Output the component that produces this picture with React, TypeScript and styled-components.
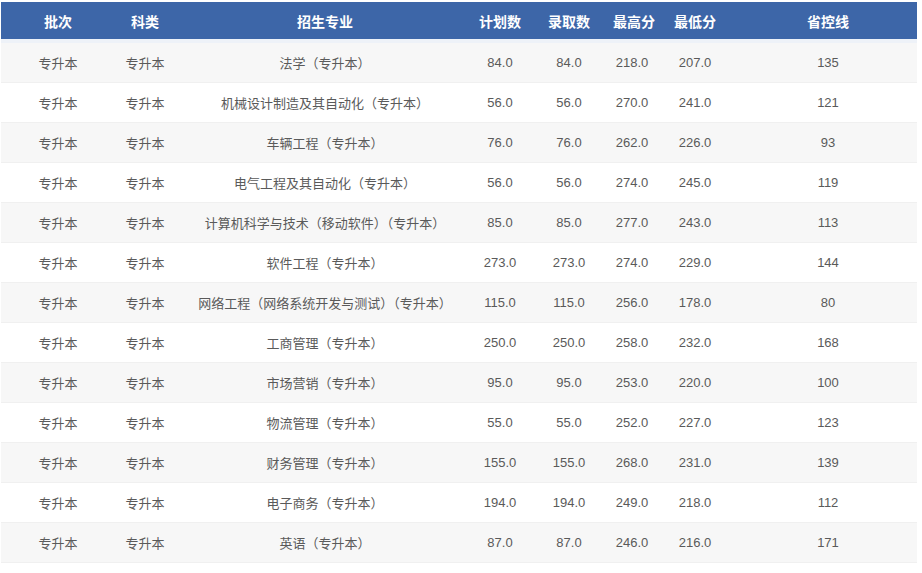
import React from 'react';
import styled, { createGlobalStyle } from 'styled-components';

const GlobalStyle = createGlobalStyle`
  body {
    margin: 0;
    background: #fff;
    font-family: "Liberation Sans", Arial, "Noto Sans CJK SC", sans-serif;
  }
`;

const Wrap = styled.div`
  padding: 2px 5px 0 1px;
`;

const Table = styled.table`
  width: 916px;
  border-collapse: collapse;
  table-layout: fixed;
`;

const HeadCell = styled.th<{ w: number }>`
  width: ${(p) => p.w}px;
  height: 37px;
  background: #3d66a8;
  color: #fff;
  font-size: 14px;
  font-weight: bold;
  text-align: center;
  white-space: nowrap;
  padding: 0;
  border-bottom: 4px solid #eef2f8;
`;

const Row = styled.tr<{ $alt: boolean }>`
  background: ${(p) => (p.$alt ? '#f7f7f7' : '#fff')};
  border-bottom: 1px solid #f0f0f0;
`;

const Cell = styled.td`
  height: 39px;
  padding: 0;
  text-align: center;
  white-space: nowrap;
  font-size: 13px;
  color: #5a5a5a;
`;

const columns: [string, number][] = [
  ['批次', 114],
  ['科类', 60],
  ['招生专业', 300],
  ['计划数', 50],
  ['录取数', 88],
  ['最高分', 38],
  ['最低分', 88],
  ['省控线', 178],
];

const rows: string[][] = [
  ['法学（专升本）', '84.0', '84.0', '218.0', '207.0', '135'],
  ['机械设计制造及其自动化（专升本）', '56.0', '56.0', '270.0', '241.0', '121'],
  ['车辆工程（专升本）', '76.0', '76.0', '262.0', '226.0', '93'],
  ['电气工程及其自动化（专升本）', '56.0', '56.0', '274.0', '245.0', '119'],
  ['计算机科学与技术（移动软件）（专升本）', '85.0', '85.0', '277.0', '243.0', '113'],
  ['软件工程（专升本）', '273.0', '273.0', '274.0', '229.0', '144'],
  ['网络工程（网络系统开发与测试）（专升本）', '115.0', '115.0', '256.0', '178.0', '80'],
  ['工商管理（专升本）', '250.0', '250.0', '258.0', '232.0', '168'],
  ['市场营销（专升本）', '95.0', '95.0', '253.0', '220.0', '100'],
  ['物流管理（专升本）', '55.0', '55.0', '252.0', '227.0', '123'],
  ['财务管理（专升本）', '155.0', '155.0', '268.0', '231.0', '139'],
  ['电子商务（专升本）', '194.0', '194.0', '249.0', '218.0', '112'],
  ['英语（专升本）', '87.0', '87.0', '246.0', '216.0', '171'],
];

const App: React.FC = () => (
  <Wrap>
    <GlobalStyle />
    <Table>
      <thead>
        <tr>
          {columns.map(([name, w]) => (
            <HeadCell key={name} w={w}>{name}</HeadCell>
          ))}
        </tr>
      </thead>
      <tbody>
        {rows.map((r, i) => (
          <Row key={i} $alt={i % 2 === 0}>
            <Cell>专升本</Cell>
            <Cell>专升本</Cell>
            {r.map((v, j) => (
              <Cell key={j}>{v}</Cell>
            ))}
          </Row>
        ))}
      </tbody>
    </Table>
  </Wrap>
);

export default App;
